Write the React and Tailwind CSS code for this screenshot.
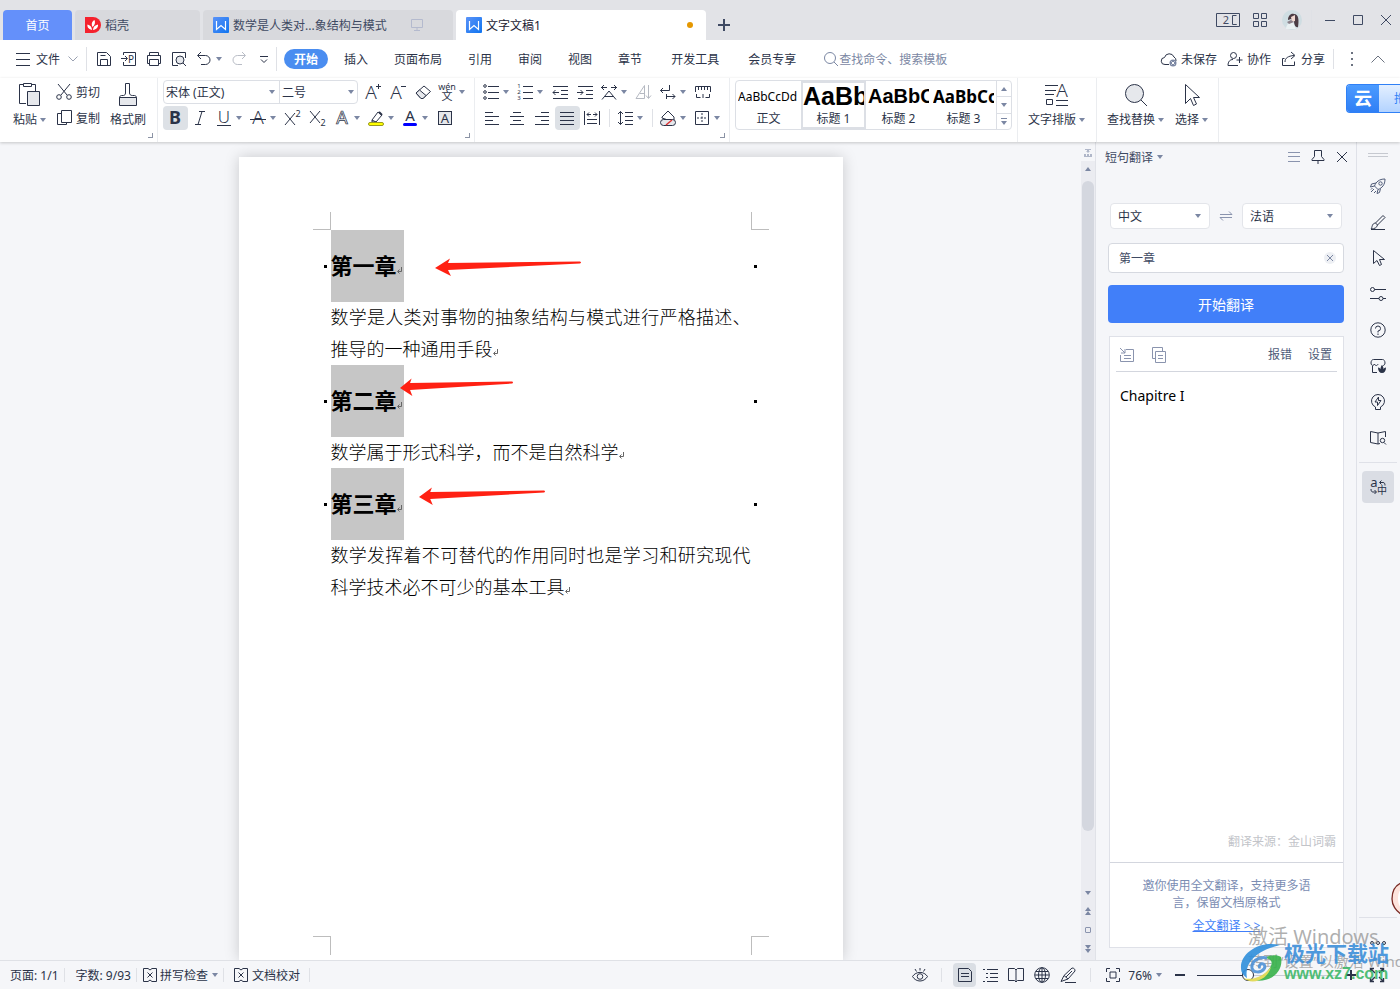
import React, { useState } from "react";
import clsx from "clsx";

const Svg = ({ w = 16, h = 16, className, children }) => (
  <svg
    width={w}
    height={h}
    viewBox={`0 0 ${w} ${h}`}
    fill="none"
    stroke="currentColor"
    aria-hidden="true"
    className={clsx("shrink-0 overflow-visible", className)}
  >
    {children}
  </svg>
);

// Letter inside an icon, kept as text
const Glyph = ({ x, y, size, children, className }) => (
  <text
    x={x}
    y={y}
    fontSize={size}
    textAnchor="middle"
    fill="currentColor"
    stroke="none"
    className={className}
  >
    {children}
  </text>
);

const Caret = ({ up, className }) => (
  <Svg w={6} h={4} className={clsx("text-[#7b87a3]", className)}>
    <path d={up ? "M0 4h6L3 0z" : "M0 0h6L3 4z"} fill="currentColor" stroke="none" />
  </Svg>
);

const Divider = ({ className }) => <span className={clsx("w-px shrink-0 bg-[#dfe1e6]", className)} />;

const WriterLogo = () => (
  <Svg className="text-white">
    <defs>
      <linearGradient id="writer" x1="0" y1="0" x2="1" y2="1">
        <stop offset="0" stopColor="#5b93f8" />
        <stop offset="1" stopColor="#0f74f0" />
      </linearGradient>
    </defs>
    <rect width="16" height="16" rx="1" fill="url(#writer)" stroke="none" />
    <path d="M3.5 4v8.5L8 8.5l4.500 4V4" strokeWidth="1.2" />
  </Svg>
);

const DocerLogo = () => (
  <Svg>
    <path d="M0 0h8a8 8 0 0 1 0 16H0z" fill="#f5222d" stroke="none" />
    <path d="M7 13C3 12 2 9.5 2.500 7.500 5 8 7 10 7 13zM7.500 10C6 7 7 4.500 9.500 3c1 2.500.5 5-2 7zM8 13c0-3 2-5 5-5.500C13.500 10 11.500 12.500 8 13z" fill="#fff" stroke="none" />
  </Svg>
);

const icons = {
  menu: <Svg><path d="M1 2.5h14M1 8.5h14M1 14.5h14" /></Svg>,
  save: <Svg><path d="M1.5 14.5v-13h9l4 4v9zM4.5 14.5v-6h7v6M4.5 4.5h5" /></Svg>,
  output: <Svg><path d="M2.5 4V1.500h12v13h-12V11M0 7.500h6M4 5l2.500 2.500L4 10" /><Glyph x="10" y="12" size="10">P</Glyph></Svg>,
  print: <Svg><path d="M3.5 4.5v-3h9v3M3.5 12.5h-2v-8h13v8h-2M3.5 8.5h9v6h-9z" /></Svg>,
  preview: <Svg><path d="M14.5 7V1.500h-13v13H7" /><circle cx="9" cy="9" r="4" fill="#e6e8ec" /><path d="M12 12l3 3" /></Svg>,
  undo: <Svg><path d="M5 1L1.500 4.500 5 8M2 4.500h7.500a4.500 4.500 0 0 1 0 9H5" /></Svg>,
  redo: <Svg className="text-[#b9bdc6]"><path d="M11 1l3.500 3.500L11 8M14 4.500H6.500a4.500 4.500 0 0 0 0 9H11" /></Svg>,
  more: <Svg w={8} h={8}><path d="M0 1.500h8M1 4.500l3 3 3-3" /></Svg>,
  cut: <Svg><path d="M2 0l9 11M14 0L5 11" /><circle cx="3" cy="13" r="2.3" /><circle cx="13" cy="13" r="2.3" /></Svg>,
  copy: <Svg><path d="M5.5.5h10v12h-10zM5 3.500H1.500v11h9V13" /></Svg>,
  grow: <Svg><Glyph x="6" y="15" size="19" className="font-light">A</Glyph><path d="M13.5 0v5M11 2.500h5" /></Svg>,
  shrink: <Svg><Glyph x="6" y="15" size="19" className="font-light">A</Glyph><path d="M11 2.500h5" /></Svg>,
  eraser: <Svg><path d="M1 9l8-7 6.500 5.500L8 14.500H6z" /><path d="M4.500 6L11 11.500 8 14.500H6L1 9z" fill="#e6e8ec" /></Svg>,
  pinyin: <Svg><Glyph x="8" y="6" size="9">wén</Glyph><Glyph x="8" y="16" size="11">文</Glyph></Svg>,
  bold: <Svg><Glyph x="8" y="14" size="18" className="font-bold">B</Glyph></Svg>,
  italic: <Svg><path d="M7 1.500h6M3 14.500h6M10 1.500l-4 13" /></Svg>,
  underline: <Svg><Glyph x="8" y="13" size="17" className="font-light">U</Glyph><path d="M1 15.500h14" /></Svg>,
  strike: <Svg><Glyph x="8" y="14" size="19" className="font-light">A</Glyph><path d="M0 9.500h16" /></Svg>,
  sup: <Svg><path d="M0 3l10 12M10 3L0 15" /><Glyph x="13" y="7" size="9">2</Glyph></Svg>,
  sub: <Svg><path d="M0 1l10 12M10 1L0 13" /><Glyph x="13" y="16" size="9">2</Glyph></Svg>,
  effect: <Svg><text x="8" y="14" fontSize="18" textAnchor="middle" fill="#fff" strokeWidth="0.700">A</text></Svg>,
  highlight: <Svg><path d="M4 10l6-8 4 3-6 7H4zM4 10l4 2" /><path d="M11 2l3 3" strokeWidth="2" /><rect x="0.5" y="12.5" width="15" height="3" rx="1.5" fill="#ffff00" stroke="#9a9a20" /></Svg>,
  color: <Svg><Glyph x="8" y="11" size="15">A</Glyph><rect x="1" y="13" width="14" height="3" rx="1.5" fill="#0000ff" stroke="none" /></Svg>,
  shading: <Svg><rect x="1.5" y="1.5" width="13" height="13" fill="#e6e8ec" /><Glyph x="8" y="13" size="13">A</Glyph></Svg>,
  bullets: <Svg><circle cx="2" cy="2" r="1.3" /><circle cx="2" cy="8" r="1.3" /><circle cx="2" cy="14" r="1.3" /><path d="M5 2.500h11M5 8.500h11M5 14.500h11" /></Svg>,
  numbers: <Svg><Glyph x="2" y="4" size="6">1</Glyph><Glyph x="2" y="10" size="6">2</Glyph><Glyph x="2" y="16" size="6">3</Glyph><path d="M6 2.500h10M6 8.500h10M6 14.500h10" /></Svg>,
  outdent: <Svg><path d="M1 2.500h15M9 6.500h7M9 10.500h7M1 14.500h15M1 8.500h6M3.500 6L1 8.500 3.500 11" /></Svg>,
  indent: <Svg><path d="M1 2.500h15M9 6.500h7M9 10.500h7M1 14.500h15M0 8.500h6M3.500 6L6 8.500 3.500 11" /></Svg>,
  scale: <Svg><path d="M1 15.500L8 7l7 8.500M4 12.500h8M0 3.500h6M10 3.500h6M3 1L.5 3.500 3 6M13 1l2.500 2.500L13 6" /></Svg>,
  sort: <Svg className="text-[#b5b9c2]"><path d="M0 14.500L8.500 1.500v13zM4 9.500h4.500M12.500 1v13M10 11.500l2.500 3 2.500-3" /></Svg>,
  wrap: <Svg><path d="M9.500 1v5.500h-9M3 4L.5 6.500 3 9M6 12.500h9M12.500 10l2.500 2.500-2.500 2.500M6.500 10v5" /></Svg>,
  ruler: <Svg><path d="M.5 8V2.500h15V8M3.500 2.500V6M6.500 2.500V6M9.500 2.500V6M12.500 2.500V6M1.500 10v3.500h4M14.500 10v3.500h-4M8 10v4" /></Svg>,
  left: <Svg><path d="M1 2.500h8M1 6.500h14M1 10.500h8M1 14.500h14" /></Svg>,
  center: <Svg><path d="M4 2.500h8M1 6.500h14M4 10.500h8M1 14.500h14" /></Svg>,
  right: <Svg><path d="M7 2.500h8M1 6.500h14M7 10.500h8M1 14.500h14" /></Svg>,
  justify: <Svg><path d="M1 2.500h14M1 6.500h14M1 10.500h14M1 14.500h14" /></Svg>,
  distribute: <Svg><path d="M.5 1v14M15.500 1v14M3 9.500h10M3 13.500h10M3 4.500h4M9 4.500h4M5 2.500l-2 2 2 2M11 2.500l2 2-2 2" /></Svg>,
  spacing: <Svg><path d="M3.500 1.500v13M1 4l2.500-2.500L6 4M1 12l2.500 2.500L6 12M8 2.500h8M8 6.500h8M8 10.500h8M8 14.500h8" /></Svg>,
  fill: <Svg><path d="M2 7l6-6 6 6v3H8L2 8z" /><rect x="0.5" y="9.5" width="15" height="6" rx="3" fill="#e6e8ec" /><path d="M6 15l6-5" stroke="#d33" strokeWidth="1.5" /></Svg>,
  border: <Svg><path d="M1.5 1.5h13v13h-13z" /><path d="M8 3v10M3 8h10" strokeDasharray="2 1.5" /></Svg>,
  search: <Svg><circle cx="7" cy="7" r="5.5" /><path d="M11 11l4 4" /></Svg>,
  cloud: <Svg><path d="M8 13.500H4A3.500 3.500 0 0 1 3.500 6.500 5 5 0 0 1 13 6a4 4 0 0 1 2 4" /><circle cx="12" cy="12" r="3.5" fill="#7b87a3" stroke="none" /><path d="M10.500 10.500l3 3M13.500 10.500l-3 3" stroke="#fff" /></Svg>,
  person: <Svg><circle cx="6.5" cy="4.5" r="3" /><path d="M6 8.500c-3 0-5 2-5 6h10M12.500 6v6M9.500 9h6" /></Svg>,
  share: <Svg><path d="M3.500 7.500h-2v7h12v-4M4 11c0-4 3-6 9-6.500M10 1l4 3.500L10 8" /></Svg>,
  rocket: <Svg className="text-[#4f5b78]"><path d="M15 1C9 1 6 4 4.500 8L8 11.500C12 10 15 7 15 1zM6 5L1.500 6 .5 9l4-1M10.500 10.500l-1 4L7 15.500l1-4M4 11l-3 3M6 13l-2 2M2.500 10L1 11.500" /><circle cx="10.5" cy="5.5" r="1.7" /></Svg>,
  pen: <Svg><path d="M5.500 9L13 1.500l2 2L7.500 11c-.5 2.500-3 4-6.500 4 1.500-1.500.5-5.500 4.500-6zM5.500 9l2 2M1 15.500h14" /></Svg>,
  pointer: <Svg><path d="M3.500.5v13L7 10.500 9.500 15.500l2-1L9.500 9.500H14.500z" /></Svg>,
  sliders: <Svg><circle cx="2.5" cy="3.5" r="2" /><path d="M4.500 3.500H16M0 12.500h9" /><circle cx="11" cy="12.5" r="2" /><path d="M13 12.500h3" /></Svg>,
  help: <Svg><circle cx="8" cy="8" r="7.2" /><path d="M5.500 6.500A2.500 2.500 0 1 1 8 9v1.500M8 11.500V13" /></Svg>,
  store: <Svg><path d="M2.500 8v6.500H7M1 5c0-2 1-3.500 2.500-3.500h9C14 1.500 15 3 15 5c0 1.500-1 2.500-2 2.500M1 5c0 3 3 3 3.500 1 .5 2 3 2 3.500 0" /><path d="M8 9.500c1.500 0 2.500 1 2.500 2 0-2 .5-3.500 1.500-4.500 1 1 1.500 2.500 1.500 4.500 0-1 1-2 2.500-2 0 3.500-1.500 5.500-4 5.500s-4-2-4-5.500z" fill="currentColor" stroke="none" /></Svg>,
  bulb: <Svg><path d="M5.500 13a6.500 6.500 0 1 1 5 0v2.500h-5zM8.500 3L5 8h2.500v3.500L11 6.500H8.500z" /></Svg>,
  bookSearch: <Svg><path d="M8 3L.5 1.500v11L8 14V3l7.500-1.500V7M8 14l2-.5" /><circle cx="12.5" cy="10.5" r="2.2" /><path d="M14 12.500l2 2" /></Svg>,
  translate: <Svg><Glyph x="4" y="8" size="13">a</Glyph><Glyph x="12" y="15" size="10">中</Glyph><path d="M10 3.500h3c1.500 0 2 1 2 3M11.500 1.500l-2 2 2 2M1 10c0 2 .5 3 2 3h3M4.500 11l2 2-2 2" /></Svg>,
  eye: <Svg><path d="M.5 9.500C4 4 12 4 15.500 9.500 12 15.500 4 15.500.5 9.500zM8 1v2.500M3 2l1.500 2.500M13 2l-1.500 2.500" /><circle cx="8" cy="9.5" r="2.8" /></Svg>,
  page: <Svg><path d="M1.500 1.500h10l3 3v10h-13zM4 6.500h8M4 9.500h8" /></Svg>,
  outline: <Svg><path d="M1 2.500h2M5 2.500h11M4 6.500h2M8 6.500h8M4 10.500h2M8 10.500h8M1 14.500h2M5 14.500h11" /></Svg>,
  book: <Svg><path d="M8 3L6.500 1.500h-6v12h6L8 15V3l1.500-1.500h6v12h-6L8 15" /></Svg>,
  globe: <Svg><circle cx="8" cy="8" r="7.3" /><ellipse cx="8" cy="8" rx="3.5" ry="7.3" /><path d="M1 8h14M8 1v14M2 4.500h12M2 11.500h12" /></Svg>,
  quill: <Svg><path d="M1 14.500l3-6L12 1c2 0 3 1 3 3l-7 8zM4 8.500L8 12M6 10l6-6M5 15.500h11" /></Svg>,
  fit: <Svg><path d="M1.500 5V1.500H5M11 1.500h3.500V5M14.500 11v3.500H11M5 14.500H1.500V11M5 5h6v6H5z" /></Svg>,
  full: <Svg><path d="M1.500 5V1.500H5M11 1.500h3.500V5M14.500 11v3.500H11M5 14.500H1.500V11M2 2l4 4M14 2l-4 4M2 14l4-4M14 14l-4-4" strokeWidth="1.4" /></Svg>,
  proof: <Svg><path d="M6 1.500H1.500v13H6M10 1.500h4.500v13H10M6 1.500L8 3l2-1.500M6 14.500L8 13l2 1.500M5.500 5.500l5 5M10.500 5.500l-5 5" /></Svg>,
  pin: <Svg><path d="M4.500 1.500h7v6l2.500 3v1H2v-1l2.500-3zM8 11.500V15" /></Svg>,
  close: <Svg><path d="M3 3l10 10M13 3L3 13" /></Svg>,
  insert: <Svg><path d="M7 2.500h7.500v12h-13V8M1 1l5 5M6 2v4H2M5 8.500h7M5 11.500h7" /></Svg>,
  duplicate: <Svg><path d="M4.500 4.500h10v11h-10zM4 11.500H1.500v-11h10V4M7 8.500h5M7 11.500h5" /></Svg>,
  swap: <Svg w={12} h={10}><path d="M0 3.500h12L9 .5M12 6.500H0l3 3" /></Svg>,
};

const Tool = ({ icon, label, caret, active }) => (
  <button
    type="button"
    aria-label={label}
    className={clsx(
      "flex h-6 shrink-0 items-center rounded-sm",
      caret ? "w-[34px] gap-1 pl-[3px]" : "w-[25px] pl-1",
      active && "bg-[#dde1e6]"
    )}
  >
    {icons[icon]}
    {caret && <Caret />}
  </button>
);

const Group = ({ children, corner, className }) => (
  <div className={clsx("relative flex shrink-0 border-r border-[#ebedf0] pt-0.5", className)}>
    {children}
    {corner && <span className="absolute right-1 bottom-1 h-[5px] w-[5px] border-r border-b border-[#8b93a5]" />}
  </div>
);

const BigButton = ({ label, caret, children }) => (
  <button type="button" className="flex shrink-0 flex-col items-center gap-1 self-start pt-0.5">
    <span className="flex h-[25px] items-center">{children}</span>
    <span className="flex items-center gap-[3px]">
      {label}
      {caret && <Caret />}
    </span>
  </button>
);

const fontRow = [
  { icon: "grow", label: "增大字号" },
  { icon: "shrink", label: "减小字号" },
  { icon: "eraser", label: "清除格式" },
  { icon: "pinyin", label: "拼音指南", caret: true },
];

const styleRow = [
  { icon: "bold", label: "加粗", active: true },
  { icon: "italic", label: "倾斜" },
  { icon: "underline", label: "下划线", caret: true },
  { icon: "strike", label: "删除线", caret: true },
  { icon: "sup", label: "上标" },
  { icon: "sub", label: "下标" },
  { icon: "effect", label: "文字效果", caret: true },
  { icon: "highlight", label: "突出显示", caret: true },
  { icon: "color", label: "字体颜色", caret: true },
  { icon: "shading", label: "字符底纹" },
];

const listRow = [
  { icon: "bullets", label: "项目符号", caret: true },
  { icon: "numbers", label: "编号", caret: true },
  { icon: "outdent", label: "减少缩进量" },
  { icon: "indent", label: "增加缩进量" },
  { icon: "scale", label: "中文版式", caret: true },
  { icon: "sort", label: "排序" },
  { icon: "wrap", label: "显示编辑标记", caret: true },
  { icon: "ruler", label: "制表位" },
];

const alignRow = [
  { icon: "left", label: "左对齐" },
  { icon: "center", label: "居中对齐" },
  { icon: "right", label: "右对齐" },
  { icon: "justify", label: "两端对齐", active: true },
  { icon: "distribute", label: "分散对齐" },
];

const styles = [
  { name: "正文", sample: "AaBbCcDd", font: "text-[12px]" },
  { name: "标题 1", sample: "AaBb", font: "font-['Liberation_Sans',sans-serif] text-[25px] font-bold", active: true },
  { name: "标题 2", sample: "AaBbC", font: "font-['Liberation_Sans',sans-serif] text-[20px] font-bold" },
  { name: "标题 3", sample: "AaBbCc", font: "text-[17px] font-bold" },
];

const menus = ["插入", "页面布局", "引用", "审阅", "视图", "章节", "开发工具", "会员专享"];

const sections = [
  {
    title: "第一章",
    arrow: { w: 146, box: "left-[104px] top-[28px]" },
    text: "数学是人类对事物的抽象结构与模式进行严格描述、推导的一种通用手段",
  },
  {
    title: "第二章",
    arrow: { w: 113, box: "left-[69px] top-[13px]" },
    text: "数学属于形式科学，而不是自然科学",
  },
  {
    title: "第三章",
    arrow: { w: 126, box: "left-[88px] top-[19px]" },
    text: "数学发挥着不可替代的作用同时也是学习和研究现代科学技术必不可少的基本工具",
  },
];

const railIcons = [
  ["rocket", "快捷"],
  ["pen", "样式"],
  ["pointer", "选择"],
  ["sliders", "属性"],
  ["help", "帮助"],
  ["store", "素材"],
  ["bulb", "推荐"],
  ["bookSearch", "查找"],
];

const TitleBar = () => (
  <header className="flex h-10 shrink-0 items-end bg-[#e2e3e7] pl-[3px] text-[#3f4a63]">
    <div className="flex gap-[3px]">
      <button type="button" className="h-[30px] w-[69px] rounded-t-sm bg-[#6490fa] text-white">首页</button>
      <button type="button" className="flex h-[30px] w-[125px] items-center gap-1 rounded-t-sm bg-[#d8d9dd] pl-2.5">
        <DocerLogo />
        稻壳
      </button>
      <button type="button" className="flex h-[30px] w-[250px] items-center gap-1 rounded-t-sm bg-[#d8d9dd] pl-2.5">
        <WriterLogo />
        数学是人类对...象结构与模式
        <Svg w={12} h={12} className="ml-5 text-[#b4bace]"><path d="M.5.5h11v8H.5zM6 8.500v3M3 11.500h6" /></Svg>
      </button>
      <button type="button" className="flex h-[30px] w-[250px] items-center gap-1 rounded-t-sm bg-white pr-[13px] pl-2.5 text-[#1c2233]">
        <WriterLogo />
        文字文稿1
        <span className="ml-auto h-1.5 w-1.5 rounded-full bg-[#e59700]" />
      </button>
    </div>
    <button type="button" aria-label="新建" className="flex h-[30px] w-9 items-center justify-center">
      <Svg w={12} h={12}><path d="M6 0v12M0 6h12" strokeWidth="2" /></Svg>
    </button>
    <div className="ml-auto flex h-10 items-center gap-[13px] pr-[9px]">
      <button type="button" aria-label="窗口">
        <Svg w={24} h={14}>
          <path d="M.5.5h23v13H.5z" />
          <path d="M20.500 2.500h-4v9h4M18.500 11.500h2" />
          <Glyph x="10" y="11" size="11">2</Glyph>
        </Svg>
      </button>
      <button type="button" aria-label="应用">
        <Svg w={14} h={14}><path d="M.5.5h5v5h-5zM8.500.5h5v5h-5zM.5 8.500h5v5h-5zM8.500 8.500h5v5h-5z" /></Svg>
      </button>
      <button type="button" aria-label="账户" className="ml-0.5">
        <Svg w={20} h={20}>
          <circle cx="10" cy="10" r="10" fill="#cfdde2" stroke="none" />
          <path d="M4 19c0-4 3-7 7-7l3 7z" fill="#e9f0f2" stroke="none" />
          <path d="M6 10c0-4 3-7 6-6 5 0 5 7 4 13-2 1-4-2-4-6l-3-2z" fill="#4b3c44" stroke="none" />
          <path d="M9 7l4-2v6l-3 1z" fill="#f0d8d0" stroke="none" />
          <path d="M5 12l4-2 3 2-5 2z" fill="#8a7f88" stroke="none" />
        </Svg>
      </button>
      <Divider className="-mx-1 h-5 bg-[#c8cbd3]" />
      <div className="flex items-center gap-[18px] pl-1">
        <button type="button" aria-label="最小化"><Svg w={10} h={10}><path d="M0 5.500h10" /></Svg></button>
        <button type="button" aria-label="最大化"><Svg w={10} h={10}><path d="M.5.5h9v9h-9z" /></Svg></button>
        <button type="button" aria-label="关闭"><Svg w={10} h={10}><path d="M0 0l10 10M10 0L0 10" /></Svg></button>
      </div>
    </div>
  </header>
);

const MenuBar = () => (
  <nav className="flex h-[38px] shrink-0 items-center bg-white px-[15px]">
    <button type="button" className="flex items-center gap-[5px]">
      {icons.menu}
      文件
      <Svg w={10} h={6} className="ml-[3px] text-[#9aa1b1]"><path d="M.5.5L5 5 9.500.5" /></Svg>
    </button>
    <Divider className="mr-[9px] ml-2 h-6" />
    <div className="flex items-center gap-[9px]">
      <button type="button" aria-label="保存">{icons.save}</button>
      <button type="button" aria-label="输出为PDF">{icons.output}</button>
      <button type="button" aria-label="打印">{icons.print}</button>
      <button type="button" aria-label="打印预览">{icons.preview}</button>
      <button type="button" aria-label="撤销" className="flex items-center gap-1">{icons.undo}<Caret /></button>
      <button type="button" aria-label="恢复">{icons.redo}</button>
      <button type="button" aria-label="更多" className="ml-1">{icons.more}</button>
    </div>
    <Divider className="mr-[7px] ml-2 h-6" />
    <button type="button" className="h-5 rounded-full bg-[#4a8df0] px-2.5 font-bold text-white">开始</button>
    <div className="ml-[3px] flex">
      {menus.map((name) => (
        <button key={name} type="button" className={name === "开发工具" ? "px-4" : "px-[13px]"}>
          {name}
        </button>
      ))}
    </div>
    <label className="ml-3.5 flex items-center text-[#7b87a3]">
      {icons.search}
      <input
        aria-label="搜索"
        placeholder="查找命令、搜索模板"
        className="w-[120px] bg-transparent placeholder:text-[#7b87a3] focus:outline-none"
      />
    </label>
    <div className="ml-auto flex items-center gap-[10px]">
      <button type="button" className="flex items-center gap-1">{icons.cloud}未保存</button>
      <button type="button" className="flex items-center gap-1">{icons.person}协作</button>
      <button type="button" className="flex items-center gap-1">{icons.share}分享</button>
    </div>
    <Divider className="mr-4 ml-2 h-5" />
    <button type="button" aria-label="更多选项">
      <Svg w={4} h={14} className="text-[#6b7280]"><path d="M1 1h2M1 7h2M1 13h2" strokeWidth="2" /></Svg>
    </button>
    <button type="button" aria-label="收起功能区" className="ml-[17px]">
      <Svg w={14} h={8} className="text-[#6b7280]"><path d="M.5 7.500L7 1l6.500 6.500" /></Svg>
    </button>
  </nav>
);

const Ribbon = () => (
  <section className="relative z-10 flex h-16 shrink-0 overflow-hidden bg-white shadow-[0_1px_3px_rgba(0,0,0,0.2)]">
    <Group corner className="w-[158px] gap-[10px] pl-[13px]">
      <BigButton label="粘贴" caret>
        <Svg w={22} h={24}>
          <path d="M7 20.500H.5v-19h4M13 1.500h3.500V8M4.500.5h8v3h-8z" />
          <path d="M8.500 8.500h12v14h-12z" fill="#e6e8ec" />
        </Svg>
      </BigButton>
      <div className="flex flex-col gap-0.5">
        <button type="button" className="flex h-6 items-center gap-1">{icons.cut}剪切</button>
        <button type="button" className="flex h-6 items-center gap-1">{icons.copy}复制</button>
      </div>
      <BigButton label="格式刷">
        <Svg w={20} h={24}>
          <path d="M7.500 10V.5h4V10c0 1.500 1 2.500 3 2.500h2c1 0 2 1 2 2h-17c0-1 1-2 2-2h2c1 0 2-1 2-2.500z" />
          <path d="M1.500 14.500h17v8h-17z" fill="#e6e8ec" />
        </Svg>
      </BigButton>
    </Group>

    <Group corner className="w-[317px] flex-col gap-0.5 pl-[5px]">
      <div className="flex">
        <div className="flex w-[195px] rounded-sm border border-[#dcdfe5]">
          <label className="relative flex w-[116px] items-center border-r border-[#dcdfe5]">
            <select aria-label="字体" className="w-full appearance-none pl-0.5 focus:outline-none">
              <option>宋体 (正文)</option>
            </select>
            <Caret className="pointer-events-none absolute right-1" />
          </label>
          <label className="relative flex flex-1 items-center">
            <select aria-label="字号" className="w-full appearance-none pl-0.5 focus:outline-none">
              <option>二号</option>
            </select>
            <Caret className="pointer-events-none absolute right-[3px]" />
          </label>
        </div>
        <div className="ml-[3px] flex">
          {fontRow.map((tool) => <Tool key={tool.icon} {...tool} />)}
        </div>
      </div>
      <div className="flex">
        {styleRow.map((tool) => <Tool key={tool.icon} {...tool} />)}
      </div>
    </Group>

    <Group corner className="w-[255px] flex-col gap-0.5 pl-[5px]">
      <div className="flex">
        {listRow.map((tool) => <Tool key={tool.icon} {...tool} />)}
      </div>
      <div className="flex items-center">
        {alignRow.map((tool) => <Tool key={tool.icon} {...tool} />)}
        <Divider className="mx-1 h-[18px]" />
        <Tool icon="spacing" label="行距" caret />
        <Divider className="mx-1 h-[18px]" />
        <Tool icon="fill" label="底纹颜色" caret />
        <Tool icon="border" label="边框" caret />
      </div>
    </Group>

    <Group className="w-[288px] pl-[5px]">
      <div className="flex h-[50px] w-[277px] rounded-sm border border-[#dcdfe5]">
        {styles.map((style) => (
          <button
            key={style.name}
            type="button"
            className={clsx(
              "flex w-[65px] flex-col items-center overflow-hidden border-2 whitespace-nowrap",
              style.active ? "border-[#dcdfe5]" : "border-transparent"
            )}
          >
            <span className={clsx("flex h-7 w-full items-center text-black", style.font)}>{style.sample}</span>
            {style.name}
          </button>
        ))}
        <div className="flex flex-1 flex-col divide-y divide-[#dcdfe5] border-l border-[#dcdfe5]">
          <button type="button" aria-label="上一行" className="flex flex-1 items-center justify-center"><Caret up /></button>
          <button type="button" aria-label="下一行" className="flex flex-1 items-center justify-center"><Caret /></button>
          <button type="button" aria-label="更多样式" className="flex flex-1 flex-col items-center justify-center gap-0.5">
            <span className="h-px w-1.5 bg-[#7b87a3]" />
            <Caret />
          </button>
        </div>
      </div>
    </Group>

    <Group className="w-[79px] pl-[10px]">
      <BigButton label="文字排版" caret>
        <Svg w={24} h={24}>
          <path d="M0 2.500h13M0 7.500h11M0 11.500h9M1.500 16.500h6v5h-6zM11 17.500h12M11 22.500h12" />
          <Glyph x="17" y="14" size="19" className="font-light">A</Glyph>
        </Svg>
      </BigButton>
    </Group>

    <Group className="w-[122px] gap-[11px] pl-[10px]">
      <BigButton label="查找替换" caret>
        <Svg w={24} h={24}><circle cx="10.5" cy="10.5" r="9" fill="#e6e8ec" /><path d="M17 17l6 6" /></Svg>
      </BigButton>
      <BigButton label="选择" caret>
        <Svg w={24} h={24}><path d="M5.500 1.500v19l5-5 3 7 3-1.500-3-6.500h6z" /></Svg>
      </BigButton>
    </Group>

    <button type="button" className="mt-1.5 ml-auto flex h-[29px] w-[54px] shrink-0 overflow-hidden rounded-l border border-r-0 border-[#2f80f6] bg-gradient-to-b from-[#e3efff] to-[#b3d3ff] whitespace-nowrap text-[#2f80f6]">
      <span className="flex h-full w-8 shrink-0 items-center justify-center bg-gradient-to-b from-[#4b9bff] to-[#2f7ff5] text-[18px] font-bold text-white">
        云
      </span>
      <span className="self-center pl-[15px]">拖拽上传</span>
    </button>
  </section>
);

const ReturnMark = () => (
  <svg width="5" height="7" viewBox="0 0 5 7" fill="none" stroke="#666" aria-hidden="true" className="inline-block align-baseline">
    <path d="M4.500 0v4.500H1M2.500 2.500l-2 2 2 2" />
  </svg>
);

const Document = () => (
  <main className="flex min-w-0 flex-1 justify-center overflow-hidden pt-[15px]">
    <article className="relative w-[604px] shrink-0 bg-white px-[92px] pt-[73px] font-['Liberation_Serif','Noto_Sans_CJK_SC',serif] text-black shadow-[0_0_14px_rgba(0,0,0,0.18)]">
      <span className="absolute top-[55px] left-[74px] h-[18px] w-[18px] border-r border-b border-[#bdbdbd]" />
      <span className="absolute top-[55px] right-[74px] h-[18px] w-[18px] border-b border-l border-[#bdbdbd]" />
      <span className="absolute bottom-[5px] left-[74px] h-[19px] w-[18px] border-t border-r border-[#bdbdbd]" />
      <span className="absolute right-[74px] bottom-[5px] h-[19px] w-[18px] border-t border-l border-[#bdbdbd]" />
      {sections.map(({ title, arrow, text }) => (
        <section key={title}>
          <h1 className="relative flex h-[72px] items-center text-[22px] font-bold">
            <span className="absolute -left-[7px] h-[3px] w-[3px] bg-black" />
            <span className="flex h-full w-[73px] items-center bg-[#c6c6c6]">
              <span>
                {title}
                <ReturnMark />
              </span>
            </span>
            <span className="absolute -right-[6px] h-[3px] w-[3px] bg-black" />
            <svg
              width={arrow.w}
              height="18"
              viewBox="0 0 146 18"
              preserveAspectRatio="none"
              aria-hidden="true"
              className={clsx("absolute", arrow.box)}
            >
              <path d="M0 10L15 0.500L13 5L145 3.500Q147 4.500 145 5.500L13 12L16 18z" fill="#ff2113" />
            </svg>
          </h1>
          <p className="-mb-px text-justify text-[18px] leading-8 font-light">
            {text}
            <ReturnMark />
          </p>
        </section>
      ))}
    </article>
  </main>
);

const ScrollBar = () => (
  <div className="flex w-[15px] shrink-0 flex-col items-center border-r border-[#e0e2e8] bg-[#ebecf1] text-[#8a94ae]">
    <span className="flex h-[19px] w-full items-center justify-center bg-[#f5f6f9] pt-0.5">
      <Svg w={8} h={8} className="text-[#b0b7c9]"><path d="M1 0h6v1H5v1h1L4 4 2 2h1V1H1zM0 5h2v3H0zM3 5h2v3H3zM6 5h2v3H6zM0 7h8v1H0z" fill="currentColor" stroke="none" /></Svg>
    </span>
    <Caret up className="mt-1.5 mb-2.5" />
    <span className="min-h-0 w-3 flex-1 rounded-full bg-[#d4d7df]" />
    <div className="flex h-[129px] flex-col items-center justify-end gap-3 pb-[7px]">
      <Caret />
      <span><Caret up /><Caret up /></span>
      <span className="h-1.5 w-1.5 rounded-[1px] border border-[#8a94ae]" />
      <span><Caret /><Caret /></span>
    </div>
  </div>
);

const LangSelect = ({ label, value }) => (
  <label className="relative flex h-[26px] w-[100px] items-center rounded-sm border border-[#e3e5ea] bg-white">
    <select aria-label={label} className="w-full appearance-none pl-[7px] focus:outline-none">
      <option>{value}</option>
    </select>
    <Caret className="pointer-events-none absolute right-2" />
  </label>
);

const TranslatePanel = () => {
  const [source, setSource] = useState("第一章");

  return (
    <aside className="flex w-[261px] shrink-0 flex-col border-r border-[#dfe1e8] px-3 pb-3">
      <div className="-ml-[3px] flex h-[30px] items-center">
        <button type="button" className="flex items-center gap-1 text-[#3f4a63]">
          短句翻译
          <Caret />
        </button>
        <div className="-mr-[6px] ml-auto flex items-center gap-2">
          <button type="button" aria-label="菜单">
            <Svg className="text-[#8a94ae]"><path d="M2 3.500h12M2 7.500h12M2 12.500h12" /></Svg>
          </button>
          <button type="button" aria-label="固定">{icons.pin}</button>
          <button type="button" aria-label="关闭">{icons.close}</button>
        </div>
      </div>

      <div className="mt-[31px] flex items-center justify-between px-0.5">
        <LangSelect label="源语言" value="中文" />
        <button type="button" aria-label="交换语言" className="text-[#8a94ae]">{icons.swap}</button>
        <LangSelect label="目标语言" value="法语" />
      </div>

      <label className="mt-3.5 flex h-[30px] items-center rounded border border-[#d6d9e0] bg-white pr-[7px] pl-2.5">
        <input
          aria-label="翻译内容"
          value={source}
          onChange={(e) => setSource(e.target.value)}
          className="min-w-0 flex-1 text-[#3f4a63] focus:outline-none"
        />
        <button
          type="button"
          aria-label="清空"
          onClick={() => setSource("")}
          className="flex h-3 w-3 items-center justify-center rounded-full bg-[#eef0f4]"
        >
          <Svg w={6} h={6} className="text-[#7b87a3]"><path d="M0 0l6 6M6 0L0 6" /></Svg>
        </button>
      </label>

      <button type="button" className="mt-3 h-[38px] shrink-0 rounded bg-[#417ff9] text-[14px] text-white">
        开始翻译
      </button>

      <div className="mt-[13px] ml-px flex min-h-0 flex-1 flex-col border border-[#dfe1e8] bg-white">
        <div className="mx-1.5 flex h-[35px] shrink-0 items-center gap-4 border-b border-[#d3d6de] pt-px pr-[5px] pl-[3px] text-[#4f5b78]">
          <button type="button" aria-label="插入" className="text-[#8a94ae]">{icons.insert}</button>
          <button type="button" aria-label="复制" className="text-[#8a94ae]">{icons.duplicate}</button>
          <button type="button" className="ml-auto">报错</button>
          <button type="button">设置</button>
        </div>
        <p className="px-2.5 pt-3.5 text-[14px] leading-5 text-black">Chapitre I</p>
        <p className="mt-auto mr-[7px] mb-3 text-right text-[#c2c4c9]">翻译来源：金山词霸</p>
        <div className="flex h-[85px] shrink-0 flex-col items-center border-t border-[#d3d6de] px-[30px] pt-3.5 text-center text-[#7b8db3]">
          <p>邀你使用全文翻译，支持更多语言，保留文档原格式</p>
          <a href="#full" className="mt-1.5 text-[#417ff9] underline">全文翻译 &gt; &gt;</a>
        </div>
      </div>
    </aside>
  );
};

const Rail = () => (
  <aside className="relative flex w-[43px] shrink-0 flex-col items-center overflow-hidden pr-0.5">
    <span className="mt-[11px] h-1 w-5 shrink-0 border-y border-[#c6c9d0]" />
    <div className="mt-[11px] flex flex-col">
      {railIcons.map(([name, label]) => (
        <button key={name} type="button" aria-label={label} className="flex h-9 w-8 items-center justify-center">
          {icons[name]}
        </button>
      ))}
    </div>
    <span className="mt-1.5 h-px w-[38px] shrink-0 bg-[#dfe1e8]" />
    <button type="button" aria-label="翻译" className="mt-2 flex h-8 w-8 shrink-0 items-center justify-center rounded-sm bg-[#dadde4]">
      {icons.translate}
    </button>
    <span className="mt-auto h-px w-[38px] shrink-0 bg-[#dfe1e8]" />
    <button type="button" aria-label="更多" className="flex h-[42px] items-center pt-2">
      <Svg w={16} h={4}><circle cx="2" cy="2" r="1.5" /><circle cx="8" cy="2" r="1.5" /><circle cx="14" cy="2" r="1.5" /></Svg>
    </button>
    {/* floating helper peeking in from the edge */}
    <Svg w={9} h={34} className="absolute right-0 bottom-[44px]">
      <path d="M10 1C3 4 1 11 1 17s4 12 9 15" fill="#fde3dc" stroke="#7a2b25" strokeWidth="1.3" />
      <path d="M10 7c-4 4-4 15 0 19" fill="#fff" stroke="none" />
    </Svg>
  </aside>
);

const StatusBar = () => {
  const [zoom, setZoom] = useState(76);

  return (
    <footer className="flex h-[29px] shrink-0 items-center border-t border-[#dfe1e6] bg-[#f5f6f9] pr-[15px] pl-2.5">
      <div className="flex items-center gap-[5px]">
        <span>页面: 1/1</span>
        <Divider className="h-3.5" />
        <span className="pl-1.5">字数: 9/93</span>
        <Divider className="h-3.5" />
        <button type="button" className="flex items-center gap-0.5">
          {icons.proof}
          拼写检查
          <Caret className="ml-0.5" />
        </button>
        <Divider className="h-3.5" />
        <button type="button" className="flex items-center gap-[3px] pl-1">
          {icons.proof}
          文档校对
        </button>
        <Divider className="ml-1 h-3.5" />
      </div>
      <div className="ml-auto flex shrink-0 items-center">
        <button type="button" aria-label="护眼模式">{icons.eye}</button>
        <Divider className="mr-[11px] ml-[13px] h-3.5" />
        <div className="flex items-center gap-[10px]">
          <button type="button" aria-label="页面视图" className="-mr-1 flex h-6 w-[23px] items-center justify-center rounded-sm bg-[#dadee4]">
            {icons.page}
          </button>
          <button type="button" aria-label="大纲">{icons.outline}</button>
          <button type="button" aria-label="阅读版式">{icons.book}</button>
          <button type="button" aria-label="Web版式">{icons.globe}</button>
          <button type="button" aria-label="写作模式">{icons.quill}</button>
        </div>
        <Divider className="mx-[14px] h-3.5" />
        <button type="button" aria-label="适合页面">{icons.fit}</button>
        <button type="button" className="ml-[7px] flex items-center gap-1">
          {zoom}%
          <Caret />
        </button>
        <button type="button" aria-label="缩小" className="ml-[13px]">
          <Svg w={10} h={10}><path d="M0 5h10" strokeWidth="2" /></Svg>
        </button>
        <input
          type="range"
          aria-label="缩放"
          min="10"
          max="200"
          value={zoom}
          onChange={(e) => setZoom(Number(e.target.value))}
          className="mx-3 h-3 w-[141px] appearance-none bg-[linear-gradient(90deg,#2b3348_36%,#c9ccd4_36%)] bg-[length:100%_1px] bg-center bg-no-repeat [&::-webkit-slider-thumb]:h-3 [&::-webkit-slider-thumb]:w-3 [&::-webkit-slider-thumb]:appearance-none [&::-webkit-slider-thumb]:rounded-full [&::-webkit-slider-thumb]:border [&::-webkit-slider-thumb]:border-[#2b3348] [&::-webkit-slider-thumb]:bg-white"
        />
        <button type="button" aria-label="放大" className="-ml-1">
          <Svg w={10} h={10}><path d="M0 5h10M5 0v10" strokeWidth="2" /></Svg>
        </button>
        <button type="button" aria-label="全屏" className="ml-[13px]">{icons.full}</button>
      </div>
    </footer>
  );
};

const Watermark = () => (
  <div className="pointer-events-none absolute right-0 bottom-0 z-20 h-[66px] w-[160px] overflow-hidden whitespace-nowrap">
    <div className="pl-2 text-[#8c8c8c]/70">
      <p className="text-[20px] leading-7">激活 Windows</p>
      <p className="text-[15px] leading-5">转到“设置”以激活 Windows。</p>
    </div>
    <div className="absolute bottom-1.5 left-0 flex items-end opacity-90">
      <Svg w={44} h={42}>
        <path d="M40 4C20-1 0 12 1 27c0 5 3 8 6 10-3-14 8-27 33-33z" fill="#2f8fdc" stroke="none" />
        <path d="M12 39c18 4 32-8 29-23-4-3-12-2-16 1 8 1 8 6 4 11-4 6-10 9-17 11z" fill="#37b24a" stroke="none" />
        <path d="M27 17c-9-2-16 4-15 10 1 5 9 5 12 1 2-3 0-6-3-5-2 1-2 3-1 4" stroke="#4f93d8" strokeWidth="3" />
        <path d="M3 37c10 3 21-2 28-11-3 12-18 19-28 11z" fill="#e3d94e" stroke="none" />
      </Svg>
      <div className="flex flex-col font-bold">
        <span className="text-[21px] leading-6 text-[#3d8fd9]">极光下载站</span>
        <span className="font-['Liberation_Sans',sans-serif] text-[16px] leading-[18px] text-[#3fb86a]">www.xz7.com</span>
      </div>
    </div>
  </div>
);

export default function App() {
  return (
    <div className="relative flex h-screen flex-col overflow-hidden bg-[#f5f6f9] font-['Noto_Sans','Noto_Sans_CJK_SC',sans-serif] text-[12px] leading-[17px] text-[#2b3348]">
      <TitleBar />
      <MenuBar />
      <Ribbon />
      <div className="flex min-h-0 flex-1">
        <Document />
        <ScrollBar />
        <TranslatePanel />
        <Rail />
      </div>
      <StatusBar />
      <Watermark />
    </div>
  );
}
